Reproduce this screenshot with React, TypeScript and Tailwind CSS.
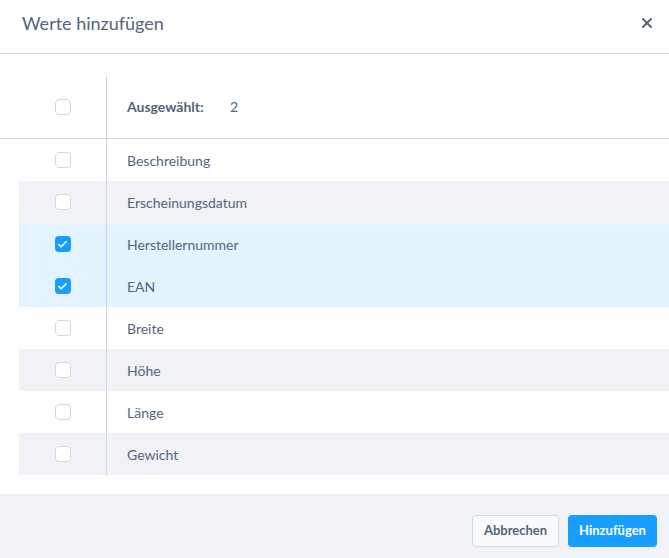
import { X, Check } from "lucide-react";

const rows = [
  { label: "Beschreibung", checked: false },
  { label: "Erscheinungsdatum", checked: false },
  { label: "Herstellernummer", checked: true },
  { label: "EAN", checked: true },
  { label: "Breite", checked: false },
  { label: "Höhe", checked: false },
  { label: "Länge", checked: false },
  { label: "Gewicht", checked: false },
];

function Box({ checked }: { checked: boolean }) {
  if (checked) {
    return (
      <span className="flex h-4 w-4 items-center justify-center rounded-[4px] bg-[#189eff]">
        <Check size={11} strokeWidth={3.5} color="#fff" />
      </span>
    );
  }
  return <span className="block h-4 w-4 rounded-[4px] border border-[#d1d9e0] bg-white" />;
}

export default function App() {
  return (
    <div
      className="flex h-[558px] w-[669px] flex-col bg-white text-[#52667a]"
      style={{ fontFamily: "Lato, 'Open Sans', sans-serif" }}
    >
      <div className="flex h-[54px] shrink-0 items-center justify-between border-b border-[#d1d9e0] pb-[7px] pl-[22px] pr-[14px]">
        <h1 className="text-[18px] font-normal">Werte hinzufügen</h1>
        <X size={16} strokeWidth={3} color="#52667a" />
      </div>

      <div className="flex-1 pt-[21px] pb-[19px]">
        <div className="flex h-[64px] border-b border-[#d1d9e0] pl-[19px]">
          <div className="flex w-[87px] items-center justify-center">
            <Box checked={false} />
          </div>
          <div className="flex flex-1 items-center border-l border-[#d1d9e0] pl-[20px] text-[14px]">
            <span className="w-[103px] font-bold">Ausgewählt:</span>
            <span>2</span>
          </div>
        </div>
        <div className="pl-[19px]">
          {rows.map((r, i) => (
            <div
              key={r.label}
              className={
                "flex h-[42px] " +
                (r.checked ? "bg-[#e3f3ff]" : i % 2 === 1 ? "bg-[#f0f2f5]" : "bg-white")
              }
            >
              <div className="flex w-[87px] items-center justify-center">
                <Box checked={r.checked} />
              </div>
              <div className="flex flex-1 items-center border-l border-[#d1d9e0] pl-[20px] text-[14px]">
                {r.label}
              </div>
            </div>
          ))}
        </div>
      </div>

      <div className="flex h-[64px] shrink-0 items-start justify-end gap-[9px] bg-[#f0f2f5] pt-[21px] pr-[12px]">
        <button className="h-[32px] w-[87px] rounded-[4px] border border-[#d1d9e0] bg-[#f9fafb] text-[13px] font-bold text-[#52667a]">
          Abbrechen
        </button>
        <button className="h-[32px] w-[89px] rounded-[4px] bg-[#189eff] text-[13px] font-bold text-white">
          Hinzufügen
        </button>
      </div>
    </div>
  );
}
